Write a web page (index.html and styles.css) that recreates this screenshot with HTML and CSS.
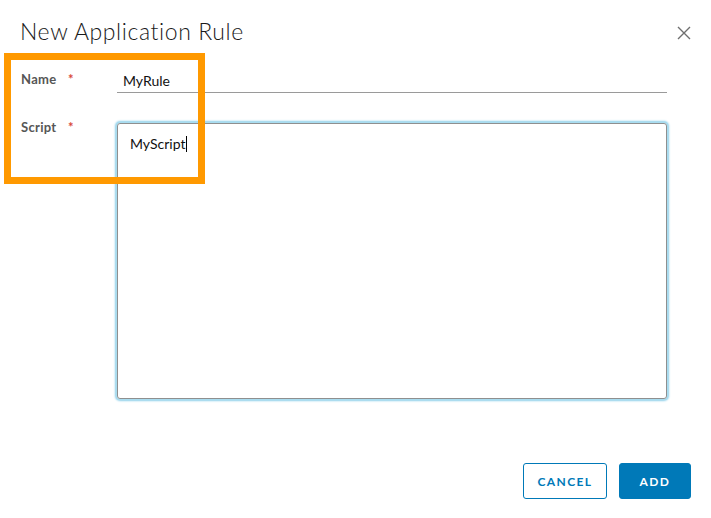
FILE: index.html
```html
<!DOCTYPE html>
<html lang="en">
<head>
<meta charset="utf-8">
<title>New Application Rule</title>
<link rel="stylesheet" href="styles.css">
</head>
<body>
<div class="dialog">
  <div class="header">
    <h1 class="title">New Application Rule</h1>
    <button class="close" aria-label="Close">
      <svg width="14" height="14" viewBox="0 0 14 14"><path d="M1 1 L13 13 M13 1 L1 13" stroke="#6f6f6f" stroke-width="1.4" fill="none"/></svg>
    </button>
  </div>
  <div class="form">
    <div class="row">
      <label class="label">Name <span class="req">*</span></label>
      <div class="input">MyRule</div>
    </div>
    <div class="row">
      <label class="label">Script <span class="req">*</span></label>
      <div class="textarea">MyScript<span class="caret"></span></div>
    </div>
  </div>
  <div class="footer">
    <button class="btn btn-outline">CANCEL</button>
    <button class="btn btn-primary">ADD</button>
  </div>
  <div class="highlight"></div>
</div>
</body>
</html>
```
FILE: styles.css
```css
* { box-sizing: border-box; }
html, body { margin: 0; padding: 0; background: #fff; }
body { width: 711px; height: 518px; overflow: hidden; font-family: Lato, "Open Sans", sans-serif; color: #333; }
.dialog { position: relative; width: 711px; height: 518px; padding: 15px 20px 0 20px; display: flex; flex-direction: column; }
.header { display: flex; justify-content: space-between; align-items: flex-start; height: 37px; }
.title { margin: 0; font-size: 23px; font-weight: 300; line-height: 32px; color: #1a1a1a; letter-spacing: 0.6px; }
.close { border: 0; background: none; padding: 0; margin: 11px 0 0 0; width: 14px; height: 14px; display: block; }
.close svg { display: block; }
.form { display: flex; flex-direction: column; gap: 30px; margin-top: 18px; }
.row { display: flex; align-items: flex-start; }
.label { width: 97px; flex: none; font-size: 13px; font-weight: 700; color: #565656; padding-left: 1px; line-height: 18px; letter-spacing: 0.3px; }
.req { color: #d8473a; margin-left: 8px; font-weight: 700; }
.input { width: 550px; height: 24px; border-bottom: 1px solid #9a9a9a; font-size: 14px; color: #111; padding: 3px 0 0 6px; line-height: 18px; margin-top: -1px; }
.row:nth-child(2) .label { margin-top: -5px; }
.textarea { width: 550px; height: 276px; border: 1px solid #8f8f8f; border-radius: 3px; box-shadow: 0 0 0 1px #a9dcef, 0 0 2px 2px #8fd0ea; font-size: 14px; color: #111; padding: 11px 12px; line-height: 18px; }
.caret { display: inline-block; width: 1px; height: 16px; background: #000; vertical-align: -3px; margin-left: 1px; }
.footer { margin-top: auto; margin-bottom: 19px; display: flex; justify-content: flex-end; gap: 12px; }
.btn { height: 36px; border-radius: 3px; font-family: Lato, "Open Sans", sans-serif; font-size: 12px; font-weight: 700; letter-spacing: 1.4px; padding: 0; cursor: pointer; }
.btn-outline { width: 84px; background: #fff; color: #0079b8; border: 1px solid #0079b8; }
.btn-primary { width: 72px; background: #0079b8; color: #fff; border: 1px solid #0079b8; }
.highlight { position: absolute; left: 4px; top: 53px; width: 201px; height: 131px; border: 7px solid #ff9900; pointer-events: none; }
```
